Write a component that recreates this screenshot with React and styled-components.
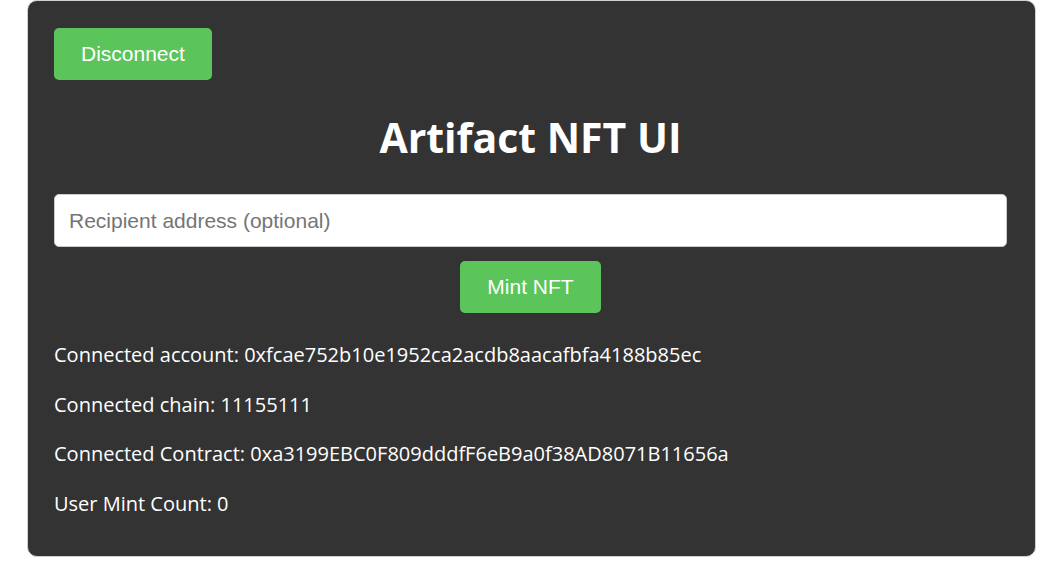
import styled, { createGlobalStyle } from 'styled-components';

const GlobalStyle = createGlobalStyle`
  html, body {
    margin: 0;
    padding: 0;
    background: #ffffff;
  }
  body {
    padding: 0 25px 0 27px;
  }
`;

const Card = styled.div`
  box-sizing: border-box;
  width: 1009px;
  padding: 27px 28px 28px 26px;
  background: #333333;
  border: 1px solid #d0d0d0;
  border-radius: 10px;
  display: flex;
  flex-direction: column;
  font-family: 'Open Sans', 'Noto Sans', sans-serif;
  color: #ffffff;
`;

const Button = styled.button`
  align-self: ${(p) => (p.$center ? 'center' : 'flex-start')};
  box-sizing: border-box;
  height: 52px;
  padding: 0 27px;
  border: none;
  border-radius: 5px;
  background: #5bc55b;
  color: #ffffff;
  font-family: 'Liberation Sans', Arial, sans-serif;
  font-size: 21px;
  cursor: pointer;
`;

const Title = styled.h1`
  margin: 27px 0 0;
  text-align: center;
  font-size: 41px;
  line-height: 60px;
  font-weight: 700;
`;

const Input = styled.input`
  box-sizing: border-box;
  width: 100%;
  height: 53px;
  margin-top: 27px;
  padding: 0 14px;
  border: 1px solid #cccccc;
  border-radius: 5px;
  background: #ffffff;
  font-family: 'Liberation Sans', Arial, sans-serif;
  font-size: 21px;
  color: #333333;
  outline: none;

  &::placeholder {
    color: #757575;
  }
`;

const MintRow = styled.div`
  display: flex;
  justify-content: center;
  margin-top: 14px;
  margin-bottom: 17px;
`;

const Info = styled.p`
  margin: 0;
  font-size: 20px;
  line-height: 49.5px;
`;

export default function App() {
  return (
    <>
      <GlobalStyle />
      <Card>
        <Button>Disconnect</Button>
        <Title>Artifact NFT UI</Title>
        <Input placeholder="Recipient address (optional)" />
        <MintRow>
          <Button $center>Mint NFT</Button>
        </MintRow>
        <Info>Connected account: 0xfcae752b10e1952ca2acdb8aacafbfa4188b85ec</Info>
        <Info>Connected chain: 11155111</Info>
        <Info>Connected Contract: 0xa3199EBC0F809dddfF6eB9a0f38AD8071B11656a</Info>
        <Info>User Mint Count: 0</Info>
      </Card>
    </>
  );
}
